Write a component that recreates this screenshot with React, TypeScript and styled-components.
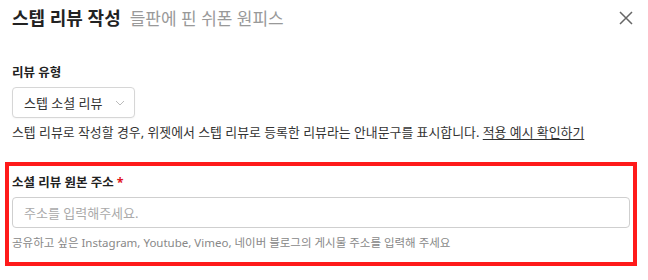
import styled, { createGlobalStyle } from 'styled-components'

const GlobalStyle = createGlobalStyle`
  html, body {
    margin: 0;
    padding: 0;
    background: #FFFFFF;
  }
  body {
    font-family: 'Noto Sans', 'Noto Sans CJK KR', sans-serif;
    color: #222222;
  }
`

const Modal = styled.div`
  width: 648px;
  height: 280px;
  box-sizing: border-box;
  background: #FFFFFF;
  overflow: hidden;
`

const Header = styled.div`
  display: flex;
  align-items: center;
  justify-content: space-between;
  padding: 5px 14px 0 12px;
  height: 26px;
`

const TitleRow = styled.div`
  display: flex;
  align-items: baseline;
  gap: 9px;
`

const Title = styled.h2`
  margin: 0;
  font-size: 18px;
  line-height: 26px;
  font-weight: 700;
  color: #222222;
`

const Subtitle = styled.span`
  font-size: 17px;
  line-height: 26px;
  font-weight: 400;
  color: #999999;
`

const CloseButton = styled.button`
  display: flex;
  align-items: center;
  justify-content: center;
  width: 16px;
  height: 16px;
  padding: 0;
  border: none;
  background: none;
  color: #666666;
  cursor: pointer;
`

const Body = styled.div`
  padding: 33px 12px 0;
`

const FieldLabel = styled.div`
  font-size: 12.5px;
  line-height: 18px;
  font-weight: 700;
  color: #222222;
`

const Required = styled.span`
  color: #E0141E;
  margin-left: 3px;
`

const SelectBox = styled.button`
  display: flex;
  align-items: center;
  gap: 12px;
  margin-top: 5px;
  height: 31px;
  box-sizing: border-box;
  padding: 0 9px 0 11px;
  border: 1px solid #D6D6D6;
  border-radius: 4px;
  background: #FFFFFF;
  font-family: inherit;
  font-size: 13px;
  color: #333333;
  box-shadow: 0 1px 2px rgba(0, 0, 0, 0.04);
`

const Description = styled.p`
  margin: 5px 0 0;
  font-size: 12.9px;
  line-height: 18px;
  color: #333333;
`

const Link = styled.a`
  color: #333333;
  text-decoration: underline;
  text-underline-offset: 2px;
`

const Highlight = styled.section`
  margin: 21px -1px 0 -7px;
  padding: 8px 3px 11px 3px;
  border: 4px solid #FF1A1A;
`

const TextInput = styled.input`
  display: block;
  width: 100%;
  height: 31px;
  box-sizing: border-box;
  margin-top: 5px;
  padding: 0 11px;
  border: 1px solid #CFCFCF;
  border-radius: 4px;
  font-family: inherit;
  font-size: 13px;
  color: #333333;
  outline: none;

  &::placeholder {
    color: #AAAAAA;
  }
`

const Helper = styled.div`
  margin-top: 6px;
  font-size: 11.5px;
  line-height: 17px;
  color: #888888;
`

export default function App() {
  return (
    <>
      <GlobalStyle />
      <Modal>
        <Header>
          <TitleRow>
            <Title>스텝 리뷰 작성</Title>
            <Subtitle>들판에 핀 쉬폰 원피스</Subtitle>
          </TitleRow>
          <CloseButton aria-label="닫기">
            <svg width="14" height="14" viewBox="0 0 14 14" fill="none">
              <path d="M1 1L13 13M13 1L1 13" stroke="currentColor" strokeWidth="1.5" />
            </svg>
          </CloseButton>
        </Header>
        <Body>
          <FieldLabel>리뷰 유형</FieldLabel>
          <SelectBox>
            <span>스텝 소셜 리뷰</span>
            <svg width="10" height="6" viewBox="0 0 10 6" fill="none">
              <path d="M1 1L5 5L9 1" stroke="#BBBBBB" strokeWidth="1" />
            </svg>
          </SelectBox>
          <Description>
            스텝 리뷰로 작성할 경우, 위젯에서 스텝 리뷰로 등록한 리뷰라는 안내문구를 표시합니다.{' '}
            <Link href="#">적용 예시 확인하기</Link>
          </Description>
          <Highlight>
            <FieldLabel>
              소셜 리뷰 원본 주소<Required>*</Required>
            </FieldLabel>
            <TextInput placeholder="주소를 입력해주세요." />
            <Helper>
              공유하고 싶은 Instagram, Youtube, Vimeo, 네이버 블로그의 게시물 주소를 입력해 주세요
            </Helper>
          </Highlight>
        </Body>
      </Modal>
    </>
  )
}
